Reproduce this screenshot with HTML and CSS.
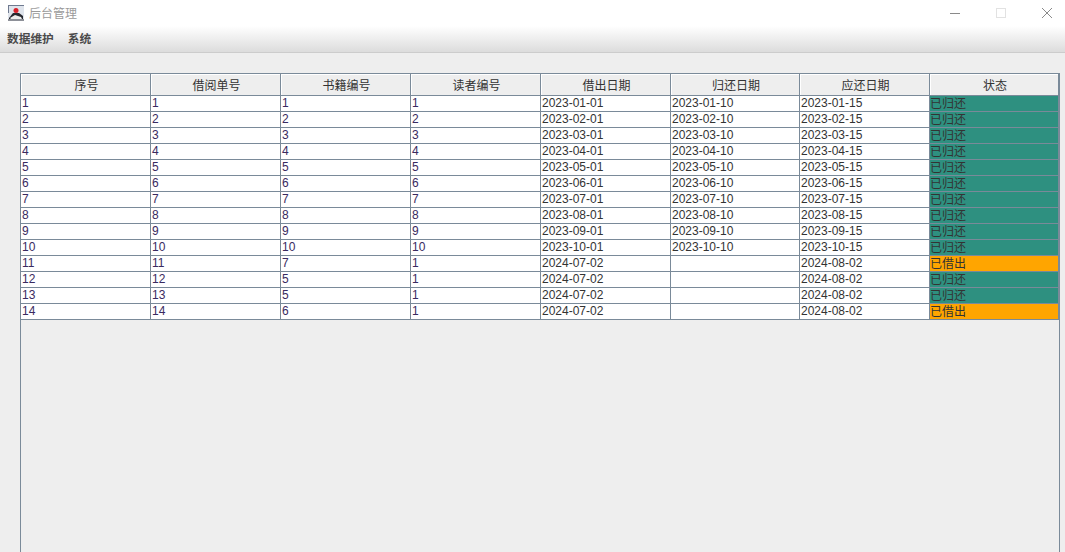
FILE: index.html
```html
<!DOCTYPE html>
<html lang="zh">
<head>
<meta charset="utf-8">
<title>后台管理</title>
<link rel="stylesheet" href="styles.css">
</head>
<body>
<header class="titlebar">
  <div class="title-left">
    <svg class="app-icon" width="16" height="16" viewBox="0 0 16 16">
      <rect x="0" y="0" width="16" height="16" fill="#dfe4ec"/>
      <path d="M0 0H16V1H1V8H0Z" fill="#6f7a90"/>
      <path d="M1 13 L5 8 L11 8 L15 11 L15 15 L1 15 Z" fill="#26282f"/>
      <path d="M2 13 L7 10 L13 12 L14 14 L3 14 Z" fill="#eeeeee"/>
      <path d="M0 14H16V16H0Z" fill="#8d9098"/>
      <circle cx="8" cy="5.500" r="2.500" fill="#d8202a"/>
    </svg>
    <span class="title-text">后台管理</span>
  </div>
  <div class="win-buttons">
    <svg width="12" height="12" viewBox="0 0 12 12"><path d="M1 6.500H11" stroke="#8a8a8a" fill="none"/></svg>
    <svg width="12" height="12" viewBox="0 0 12 12"><rect x="1.500" y="1.500" width="9" height="9" stroke="#e2e2e2" fill="none"/></svg>
    <svg width="12" height="12" viewBox="0 0 12 12"><path d="M1 1L11 11M11 1L1 11" stroke="#8a8a8a" fill="none"/></svg>
  </div>
</header>
<nav class="menubar">
  <span class="menu-item">数据维护</span>
  <span class="menu-item">系统</span>
</nav>
<main class="content">
  <div class="table-pane">
    <table class="grid">
      <colgroup>
        <col class="c130"><col class="c130"><col class="c130"><col class="c130"><col class="c130"><col class="c129"><col class="c130"><col class="c129">
      </colgroup>
      <thead>
        <tr><th>序号</th><th>借阅单号</th><th>书籍编号</th><th>读者编号</th><th>借出日期</th><th>归还日期</th><th>应还日期</th><th>状态</th></tr>
      </thead>
      <tbody>
        <tr><td class="id">1</td><td class="id">1</td><td class="id">1</td><td class="id">1</td><td>2023-01-01</td><td>2023-01-10</td><td>2023-01-15</td><td class="back">已归还</td></tr>
        <tr><td class="id">2</td><td class="id">2</td><td class="id">2</td><td class="id">2</td><td>2023-02-01</td><td>2023-02-10</td><td>2023-02-15</td><td class="back">已归还</td></tr>
        <tr><td class="id">3</td><td class="id">3</td><td class="id">3</td><td class="id">3</td><td>2023-03-01</td><td>2023-03-10</td><td>2023-03-15</td><td class="back">已归还</td></tr>
        <tr><td class="id">4</td><td class="id">4</td><td class="id">4</td><td class="id">4</td><td>2023-04-01</td><td>2023-04-10</td><td>2023-04-15</td><td class="back">已归还</td></tr>
        <tr><td class="id">5</td><td class="id">5</td><td class="id">5</td><td class="id">5</td><td>2023-05-01</td><td>2023-05-10</td><td>2023-05-15</td><td class="back">已归还</td></tr>
        <tr><td class="id">6</td><td class="id">6</td><td class="id">6</td><td class="id">6</td><td>2023-06-01</td><td>2023-06-10</td><td>2023-06-15</td><td class="back">已归还</td></tr>
        <tr><td class="id">7</td><td class="id">7</td><td class="id">7</td><td class="id">7</td><td>2023-07-01</td><td>2023-07-10</td><td>2023-07-15</td><td class="back">已归还</td></tr>
        <tr><td class="id">8</td><td class="id">8</td><td class="id">8</td><td class="id">8</td><td>2023-08-01</td><td>2023-08-10</td><td>2023-08-15</td><td class="back">已归还</td></tr>
        <tr><td class="id">9</td><td class="id">9</td><td class="id">9</td><td class="id">9</td><td>2023-09-01</td><td>2023-09-10</td><td>2023-09-15</td><td class="back">已归还</td></tr>
        <tr><td class="id">10</td><td class="id">10</td><td class="id">10</td><td class="id">10</td><td>2023-10-01</td><td>2023-10-10</td><td>2023-10-15</td><td class="back">已归还</td></tr>
        <tr><td class="id">11</td><td class="id">11</td><td class="id">7</td><td class="id">1</td><td>2024-07-02</td><td></td><td>2024-08-02</td><td class="out">已借出</td></tr>
        <tr><td class="id">12</td><td class="id">12</td><td class="id">5</td><td class="id">1</td><td>2024-07-02</td><td></td><td>2024-08-02</td><td class="back">已归还</td></tr>
        <tr><td class="id">13</td><td class="id">13</td><td class="id">5</td><td class="id">1</td><td>2024-07-02</td><td></td><td>2024-08-02</td><td class="back">已归还</td></tr>
        <tr><td class="id">14</td><td class="id">14</td><td class="id">6</td><td class="id">1</td><td>2024-07-02</td><td></td><td>2024-08-02</td><td class="out">已借出</td></tr>
      </tbody>
    </table>
  </div>
</main>
</body>
</html>
```
FILE: styles.css
```css
html, body {
  margin: 0;
  height: 100%;
  overflow: hidden;
  background: #eeeeee;
  font-family: "Liberation Sans", "Noto Sans CJK SC", sans-serif;
  font-size: 12px;
  color: #333333;
}
body {
  display: flex;
  flex-direction: column;
}
.titlebar {
  flex: none;
  height: 26px;
  display: flex;
  justify-content: space-between;
  align-items: center;
  background: #ffffff;
  padding-left: 8px;
  padding-right: 12px;
}
.title-left {
  display: flex;
  align-items: center;
  gap: 5px;
}
.app-icon { display: block; }
.title-text {
  color: #9a9a9a;
  font-size: 12px;
  margin-bottom: 2px;
}
.win-buttons {
  display: flex;
  gap: 34px;
  padding-right: 0;
}
.win-buttons svg { display: block; }
.menubar {
  flex: none;
  height: 23px;
  display: flex;
  gap: 14px;
  align-items: center;
  padding: 0 7px 3px;
  background: linear-gradient(#ffffff, #dcdcdc);
  border-bottom: 1px solid #cccccc;
}
.menu-item {
  font-weight: 700;
  font-size: 11.700px;
  color: #4a4a4a;
}
.content {
  flex: 1;
  padding: 20px 6px 0 20px;
  min-height: 0;
}
.table-pane {
  box-sizing: border-box;
  width: 1040px;
  height: 600px;
  border: 1px solid #7a8a99;
}
.grid {
  border-collapse: separate;
  border-spacing: 0;
  table-layout: fixed;
  width: 1038px;
}
.c130 { width: 130px; }
.c129 { width: 129px; }
.grid th {
  box-sizing: border-box;
  height: 22px;
  padding: 0 0 0 2px;
  font-weight: 400;
  font-size: 12px;
  color: #333333;
  background: #eeeeee;
  box-shadow: inset 1px 1px 0 #ffffff;
  border-right: 1px solid #7a8a99;
  border-bottom: 1px solid #7a8a99;
  text-align: center;
  vertical-align: middle;
}
.grid td {
  box-sizing: border-box;
  height: 16px;
  padding: 0 0 0 1px;
  line-height: 15px;
  background: #ffffff;
  border-right: 1px solid #7a8a99;
  border-bottom: 1px solid #7a8a99;
  white-space: nowrap;
  overflow: hidden;
}
.grid td.id { color: #3a2a60; }
.grid td.back,
.grid td.out {
  padding: 1px 0 0;
  line-height: 14px;
}
.grid td.back { background: #2e9080; }
.grid td.out { background: #ffa500; }
```
